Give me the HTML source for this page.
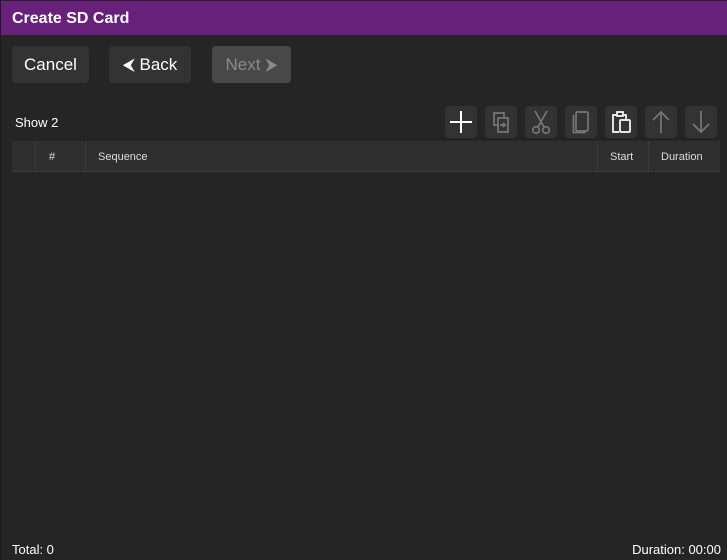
<!DOCTYPE html>
<html><head><meta charset="utf-8"><style>
*{box-sizing:border-box;margin:0;padding:0}
body{width:727px;height:560px;background:#252525;font-family:"Liberation Sans",sans-serif;color:#fff;position:relative;overflow:hidden}
.title{position:absolute;left:1px;top:1px;width:726px;height:34px;background:#68217a;font-size:16px;font-weight:bold;padding:9px 0 0 11px}
.btn{position:absolute;top:46px;height:37px;background:#333;border-radius:4px;font-size:17px;text-align:center;line-height:37px}
.tb{position:absolute;top:106px;width:32px;height:32px;background:#333;border-radius:4px}
.tb svg{position:absolute;left:0;top:0}
.hdr{position:absolute;top:141px;left:12px;width:708px;height:31px;background:#2f2f2f;border-bottom:1px solid #3c3c3c;font-size:11px;color:#ddd}
.hdr div{position:absolute;top:0;height:31px;line-height:33px;border-left:1px solid #3c3c3c;padding-left:12px}
</style></head><body>
<div style="position:absolute;left:0;top:0;width:1px;height:560px;background:#1a1a1a"></div>
<div class="title">Create SD Card</div>
<div class="btn" style="left:12px;width:77px">Cancel</div>
<div class="btn" style="left:109px;width:82px">&#x2B9C; Back</div>
<div class="btn" style="left:212px;width:79px;background:#484848;color:#8a8a8a">Next &#x2B9E;</div>
<div style="position:absolute;left:15px;top:115px;font-size:13px">Show 2</div>
<div class="tb" style="left:445px"><svg width="32" height="32"><path d="M16 5V27M5 16H27" stroke="#fff" stroke-width="2"/></svg></div>
<div class="tb" style="left:485px"><svg width="32" height="32" fill="none" stroke="#777" stroke-width="1.7"><path d="M14 19H9V7h10v5"/><path d="M13 12h10v14h-10z"/><path d="M15 19h5l-2-2m2 2l-2 2"/></svg></div>
<div class="tb" style="left:525px"><svg width="32" height="32" fill="none" stroke="#777" stroke-width="1.7"><path d="M10 5L19 21M22 5L13 21"/><circle cx="11" cy="24" r="3.3"/><circle cx="21" cy="24" r="3.3"/></svg></div>
<div class="tb" style="left:565px"><svg width="32" height="32" fill="none" stroke="#777" stroke-width="1.7"><rect x="11" y="6" width="12" height="19" rx="1.5"/><path d="M8.5 9v17.5h12"/></svg></div>
<div class="tb" style="left:605px"><svg width="32" height="32" fill="none" stroke="#fff" stroke-width="1.7"><path d="M11 9H8v17h6M19 9h2v4"/><rect x="12" y="6" width="6" height="4"/><rect x="15" y="14" width="10" height="12" rx="1"/></svg></div>
<div class="tb" style="left:645px"><svg width="32" height="32" fill="none" stroke="#777" stroke-width="1.7"><path d="M16 6V27M8 14l8-8 8 8"/></svg></div>
<div class="tb" style="left:685px"><svg width="32" height="32" fill="none" stroke="#777" stroke-width="1.7"><path d="M16 5V26M8 18l8 8 8-8"/></svg></div>
<div class="hdr">
<div style="left:23px;width:50px;padding-left:13px">#</div>
<div style="left:73px;width:512px">Sequence</div>
<div style="left:585px;width:51px">Start</div>
<div style="left:636px;width:72px">Duration</div>
</div>
<div style="position:absolute;left:12px;top:542px;font-size:13px">Total: 0</div>
<div style="position:absolute;right:6px;top:542px;font-size:13px">Duration: 00:00</div>
</body></html>
